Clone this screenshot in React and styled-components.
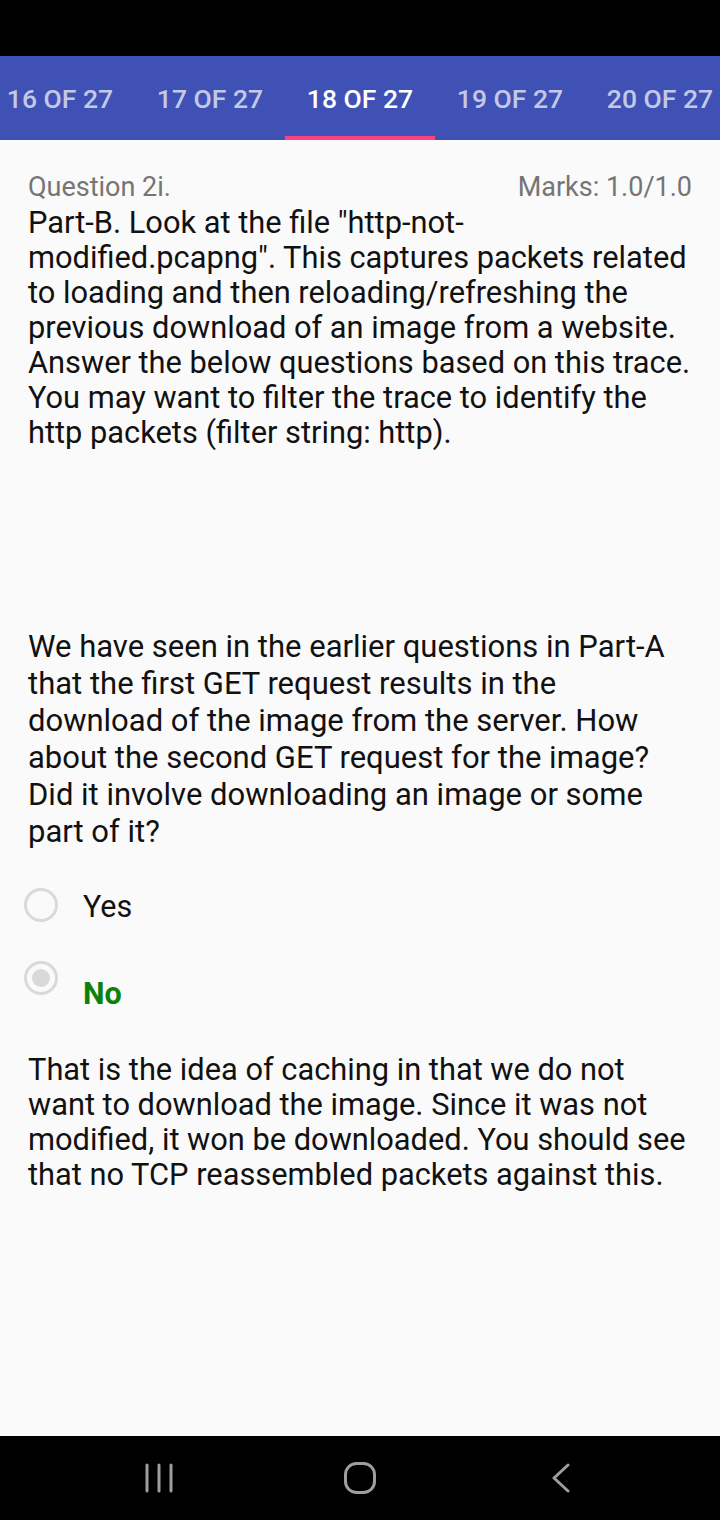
import React from 'react';
import styled, { createGlobalStyle } from 'styled-components';

const GlobalStyle = createGlobalStyle`
    html, body {
        margin : 0;
        padding : 0;
        background : #fafafa;
    }
    * {
        box-sizing : border-box;
    }
`;

const Screen = styled.div`
    width : 720px;
    height : 1520px;
    display : flex;
    flex-direction : column;
    font-family : Roboto, "Noto Sans", sans-serif;
    background : #fafafa;
`;

const StatusBar = styled.div`
    height : 56px;
    background : #000;
    flex-shrink : 0;
`;

const TabBar = styled.div`
    height : 84px;
    background : #3f51b5;
    overflow : hidden;
    flex-shrink : 0;
`;

const TabRow = styled.div`
    display : flex;
    height : 100%;
    margin-left : -15px;
`;

const Tab = styled.div`
    position : relative;
    flex : 0 0 150px;
    display : flex;
    align-items : center;
    justify-content : center;
    font-size : 26.5px;
    font-weight : 500;
    text-transform : uppercase;
    white-space : nowrap;
    color : ${p => (p.$active ? '#fff' : 'rgba(255, 255, 255, 0.7)')};

    &::after {
        content : '';
        display : ${p => (p.$active ? 'block' : 'none')};
        position : absolute;
        left : 0;
        right : 0;
        bottom : 0;
        height : 4px;
        background : #ff4081;
    }
`;

const Content = styled.div`
    flex : 1;
    padding : 30px 28px 0 28px;
`;

const Header = styled.div`
    display : flex;
    justify-content : space-between;
    font-size : 27px;
    line-height : 35px;
    color : #757575;
`;

const Paragraph = styled.p`
    margin : ${p => p.$margin || '0'};
    font-size : ${p => p.$size || '30.8px'};
    line-height : ${p => p.$lh || '35px'};
    color : #111;
`;

const Options = styled.div`
    display : flex;
    flex-direction : column;
    margin-top : 38px;
`;

const Option = styled.label`
    display : flex;
    align-items : flex-start;
    height : ${p => p.$h};
    margin-left : -4px;
`;

const Radio = styled.span`
    width : 34px;
    height : 34px;
    border-radius : 50%;
    border : 3px solid #d9d9d9;
    display : flex;
    align-items : center;
    justify-content : center;
    flex-shrink : 0;

    &::after {
        content : '';
        display : ${p => (p.$checked ? 'block' : 'none')};
        width : 18px;
        height : 18px;
        border-radius : 50%;
        background : #d9d9d9;
    }
`;

const OptionText = styled.span`
    margin-left : 25px;
    padding-top : ${p => p.$offset || '0'};
    font-size : 30.5px;
    line-height : 37px;
    font-weight : ${p => (p.$correct ? 700 : 400)};
    color : ${p => (p.$correct ? '#0a820a' : '#111')};
`;

const NavBar = styled.div`
    height : 84px;
    background : #000;
    display : flex;
    align-items : center;
    justify-content : center;
    gap : 141px;
    flex-shrink : 0;
`;

const NavSlot = styled.div`
    width : 60px;
    display : flex;
    justify-content : center;
    align-items : center;
`;

const tabs = [16, 17, 18, 19, 20];

const App = () => {
    return (
        <Screen>
            <GlobalStyle />
            <StatusBar />
            <TabBar>
                <TabRow>
                    {tabs.map(n => (
                        <Tab key={n} $active={n === 18}>
                            {n} of 27
                        </Tab>
                    ))}
                </TabRow>
            </TabBar>
            <Content>
                <Header>
                    <span>Question 2i.</span>
                    <span>Marks: 1.0/1.0</span>
                </Header>
                <Paragraph>
                    Part-B. Look at the file "http-not-modified.pcapng". This captures packets related
                    to loading and then reloading/refreshing the previous download of an image from a
                    website. Answer the below questions based on this trace. You may want to filter the
                    trace to identify the http packets (filter string: http).
                </Paragraph>
                <Paragraph $margin="178px 0 0" $lh="37px" $size="31px">
                    We have seen in the earlier questions in Part-A that the first GET request results in
                    the download of the image from the server. How about the second GET request for the
                    image? Did it involve downloading an image or some part of it?
                </Paragraph>
                <Options>
                    <Option $h="73px">
                        <Radio />
                        <OptionText $offset="0px">Yes</OptionText>
                    </Option>
                    <Option $h="91px">
                        <Radio $checked />
                        <OptionText $correct $offset="14px">No</OptionText>
                    </Option>
                </Options>
                <Paragraph>
                    That is the idea of caching in that we do not want to download the image. Since it was
                    not modified, it won be downloaded. You should see that no TCP reassembled packets
                    against this.
                </Paragraph>
            </Content>
            <NavBar>
                <NavSlot>
                    <svg width="28" height="30" viewBox="0 0 28 30" fill="none" stroke="#9e9e9e" strokeWidth="3" strokeLinecap="round">
                        <line x1="2" y1="2" x2="2" y2="28" />
                        <line x1="14" y1="2" x2="14" y2="28" />
                        <line x1="26" y1="2" x2="26" y2="28" />
                    </svg>
                </NavSlot>
                <NavSlot>
                    <svg width="32" height="32" viewBox="0 0 32 32" fill="none" stroke="#9e9e9e" strokeWidth="3">
                        <rect x="1.5" y="1.5" width="29" height="29" rx="11" />
                    </svg>
                </NavSlot>
                <NavSlot>
                    <svg width="20" height="30" viewBox="0 0 20 30" fill="none" stroke="#9e9e9e" strokeWidth="3" strokeLinecap="round" strokeLinejoin="round">
                        <polyline points="17,2 3,15 17,28" />
                    </svg>
                </NavSlot>
            </NavBar>
        </Screen>
    );
};

export default App;
